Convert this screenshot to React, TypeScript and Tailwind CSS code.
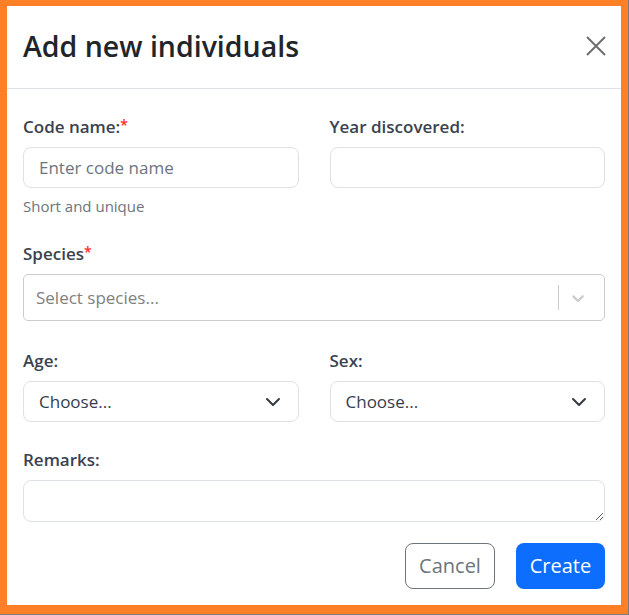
import React from 'react';

const FONT = { fontFamily: '"Open Sans", "Noto Sans", sans-serif' };

const Label: React.FC<{ text: string; required?: boolean }> = ({ text, required }) => (
  <label className="block text-[17px] leading-[24px] font-semibold text-[#3a4250] mb-[8px]">
    {text}
    {required && <span className="text-[#ff2a2a] align-top text-[14px] leading-[20px]">*</span>}
  </label>
);

const ChooseSelect: React.FC = () => (
  <div className="h-[41px] flex items-center justify-between border border-[#dee2e6] rounded-[8px] pl-[15px] pr-[17px] text-[17px] text-[#353d4a]">
    <span>Choose...</span>
    <svg width="16" height="16" viewBox="0 0 16 16" fill="none">
      <path d="m2 5 6 6 6-6" stroke="#343a40" strokeWidth="2" strokeLinecap="round" strokeLinejoin="round" />
    </svg>
  </div>
);

export default function App() {
  return (
    <div
      className="w-[629px] h-[615px] bg-[#fd7f27] pt-[6px] pl-[7px] pr-[7px] pb-[9px] border-r border-b border-[#7d7d7d]"
      style={FONT}
    >
      <div className="h-full bg-white flex flex-col">
        {/* header */}
        <div className="h-[83px] shrink-0 border-b border-[#dee2e6] pl-[16px] pr-[15px] flex items-center justify-between">
          <h1 className="text-[28.5px] font-semibold text-[#212529] leading-none mt-[-2px]">Add new individuals</h1>
          <button className="w-[20px] h-[20px] mt-[-2px]">
            <svg width="20" height="20" viewBox="0 0 20 20">
              <path d="M1 1 19 19M19 1 1 19" stroke="#6e6e6e" strokeWidth="2" />
            </svg>
          </button>
        </div>

        {/* body */}
        <div className="px-[16px] pt-[26px]">
          <div className="grid grid-cols-2 gap-x-[31px]">
            <div>
              <Label text="Code name:" required />
              <input
                className="w-full h-[41px] border border-[#dee2e6] rounded-[8px] px-[15px] text-[17px] text-[#212529] placeholder:text-[#6c757d] outline-none"
                placeholder="Enter code name"
              />
              <div className="mt-[7px] text-[15px] leading-[22px] text-[#6c757d]">Short and unique</div>
            </div>
            <div>
              <Label text="Year discovered:" />
              <input className="w-full h-[41px] border border-[#dee2e6] rounded-[8px] px-[15px] text-[17px] outline-none" />
            </div>
          </div>

          <div className="mt-[25px]">
            <Label text="Species" required />
            <div className="h-[47px] flex items-center border border-[#cccccc] rounded-[5px] pl-[12px]">
              <span className="flex-1 text-[17px] text-[#808080]">Select species...</span>
              <span className="w-px h-[25px] bg-[#cccccc]" />
              <svg className="ml-[9px] mr-[16px]" width="20" height="20" viewBox="0 0 20 20" fill="#cccccc">
                <path d="M4.516 7.548c0.436-0.446 1.043-0.481 1.576 0l3.908 3.747 3.908-3.747c0.533-0.481 1.141-0.446 1.574 0 0.436 0.445 0.408 1.197 0 1.615-0.406 0.418-4.695 4.502-4.695 4.502-0.217 0.223-0.502 0.335-0.787 0.335s-0.57-0.112-0.789-0.335c0 0-4.287-4.084-4.695-4.502s-0.436-1.17 0-1.615z" />
              </svg>
            </div>
          </div>

          <div className="grid grid-cols-2 gap-x-[31px] mt-[28px]">
            <div>
              <Label text="Age:" />
              <ChooseSelect />
            </div>
            <div>
              <Label text="Sex:" />
              <ChooseSelect />
            </div>
          </div>

          <div className="mt-[26px]">
            <Label text="Remarks:" />
            <textarea className="block w-full h-[42px] border border-[#dee2e6] rounded-[8px] px-[15px] py-[6px] text-[17px] outline-none" />
          </div>

          <div className="flex justify-end gap-[21px] mt-[21px]">
            <button className="h-[46px] w-[90px] border border-[#6c757d] rounded-[8px] text-[20px] text-[#6c757d]">
              Cancel
            </button>
            <button className="h-[46px] w-[89px] bg-[#0d6efd] rounded-[8px] text-[20px] text-white">
              Create
            </button>
          </div>
        </div>
      </div>
    </div>
  );
}
